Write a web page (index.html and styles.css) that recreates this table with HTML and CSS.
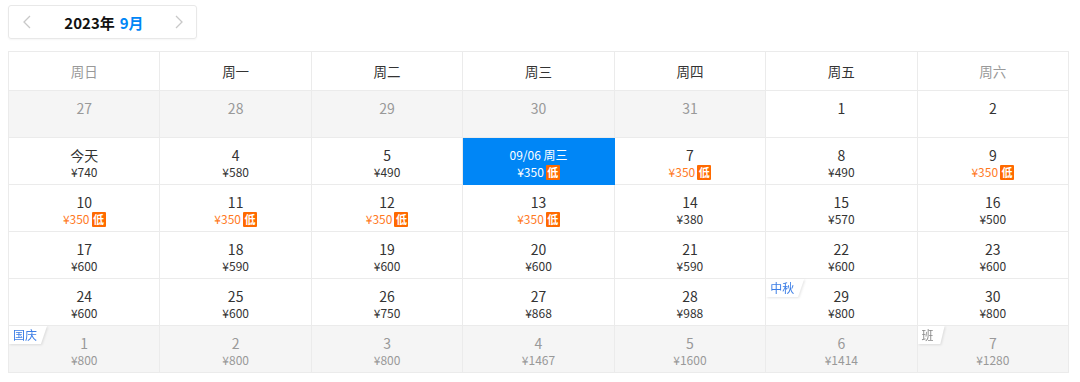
FILE: index.html
```html
<!DOCTYPE html>
<html lang="zh-CN">
<head>
<meta charset="utf-8">
<title>日历</title>
<link rel="stylesheet" href="styles.css">
</head>
<body>
<div class="page">
  <div class="nav">
    <span class="chev">
      <svg width="8" height="14" viewBox="0 0 8 14"><path d="M7 1 L1 7 L7 13" fill="none" stroke="#c8c8c8" stroke-width="1.3"/></svg>
    </span>
    <span class="title"><span class="year">2023年</span><span class="month">9月</span></span>
    <span class="chev">
      <svg width="8" height="14" viewBox="0 0 8 14"><path d="M1 1 L7 7 L1 13" fill="none" stroke="#c8c8c8" stroke-width="1.3"/></svg>
    </span>
  </div>

  <div class="cal">
    <div class="wk weekend">周日</div>
    <div class="wk">周一</div>
    <div class="wk">周二</div>
    <div class="wk">周三</div>
    <div class="wk">周四</div>
    <div class="wk">周五</div>
    <div class="wk weekend">周六</div>

    <div class="day other"><div class="num">27</div></div>
    <div class="day other"><div class="num">28</div></div>
    <div class="day other"><div class="num">29</div></div>
    <div class="day other"><div class="num">30</div></div>
    <div class="day other"><div class="num">31</div></div>
    <div class="day"><div class="num">1</div></div>
    <div class="day"><div class="num">2</div></div>

    <div class="day"><div class="num">今天</div><div class="price">¥740</div></div>
    <div class="day"><div class="num">4</div><div class="price">¥580</div></div>
    <div class="day"><div class="num">5</div><div class="price">¥490</div></div>
    <div class="day selected"><div class="num sel">09/06 周三</div><div class="price">¥350<span class="low">低</span></div></div>
    <div class="day"><div class="num">7</div><div class="price cheap">¥350<span class="low">低</span></div></div>
    <div class="day"><div class="num">8</div><div class="price">¥490</div></div>
    <div class="day"><div class="num">9</div><div class="price cheap">¥350<span class="low">低</span></div></div>

    <div class="day"><div class="num">10</div><div class="price cheap">¥350<span class="low">低</span></div></div>
    <div class="day"><div class="num">11</div><div class="price cheap">¥350<span class="low">低</span></div></div>
    <div class="day"><div class="num">12</div><div class="price cheap">¥350<span class="low">低</span></div></div>
    <div class="day"><div class="num">13</div><div class="price cheap">¥350<span class="low">低</span></div></div>
    <div class="day"><div class="num">14</div><div class="price">¥380</div></div>
    <div class="day"><div class="num">15</div><div class="price">¥570</div></div>
    <div class="day"><div class="num">16</div><div class="price">¥500</div></div>

    <div class="day"><div class="num">17</div><div class="price">¥600</div></div>
    <div class="day"><div class="num">18</div><div class="price">¥590</div></div>
    <div class="day"><div class="num">19</div><div class="price">¥600</div></div>
    <div class="day"><div class="num">20</div><div class="price">¥600</div></div>
    <div class="day"><div class="num">21</div><div class="price">¥590</div></div>
    <div class="day"><div class="num">22</div><div class="price">¥600</div></div>
    <div class="day"><div class="num">23</div><div class="price">¥600</div></div>

    <div class="day"><div class="num">24</div><div class="price">¥600</div></div>
    <div class="day"><div class="num">25</div><div class="price">¥600</div></div>
    <div class="day"><div class="num">26</div><div class="price">¥750</div></div>
    <div class="day"><div class="num">27</div><div class="price">¥868</div></div>
    <div class="day"><div class="num">28</div><div class="price">¥988</div></div>
    <div class="day"><span class="tag"><span class="tag-text">中秋</span></span><div class="num">29</div><div class="price">¥800</div></div>
    <div class="day"><div class="num">30</div><div class="price">¥800</div></div>

    <div class="day other"><span class="tag"><span class="tag-text">国庆</span></span><div class="num">1</div><div class="price">¥800</div></div>
    <div class="day other"><div class="num">2</div><div class="price">¥800</div></div>
    <div class="day other"><div class="num">3</div><div class="price">¥800</div></div>
    <div class="day other"><div class="num">4</div><div class="price">¥1467</div></div>
    <div class="day other"><div class="num">5</div><div class="price">¥1600</div></div>
    <div class="day other"><div class="num">6</div><div class="price">¥1414</div></div>
    <div class="day other"><span class="tag work"><span class="tag-text">班</span></span><div class="num">7</div><div class="price">¥1280</div></div>
  </div>
</div>
</body>
</html>
```

FILE: styles.css
```css
* { box-sizing: border-box; }

body {
  margin: 0;
  background: #fff;
  font-family: "Noto Sans CJK SC", "Noto Sans", sans-serif;
  color: #333;
}

.page {
  padding: 5px 8px 0 8px;
}

.nav {
  width: 189px;
  height: 34px;
  border: 1px solid #e8e8e8;
  border-radius: 3px;
  box-shadow: 0 1px 2px rgba(0, 0, 0, 0.04);
  display: flex;
  align-items: center;
  justify-content: space-between;
  padding: 0 13px 0 14px;
}

.chev {
  display: flex;
  align-items: center;
}

.title {
  font-size: 15px;
  font-weight: 700;
  display: flex;
  gap: 5px;
  margin-left: 2px;
}

.year { color: #111; }
.month { color: #0086f6; }

.cal {
  margin-top: 12px;
  width: 1061px;
  display: grid;
  grid-template-columns: repeat(7, 1fr);
  border-top: 1px solid #ebebeb;
  border-left: 1px solid #ebebeb;
}

.wk {
  height: 39px;
  display: flex;
  align-items: center;
  justify-content: center;
  font-size: 13.5px;
  color: #333;
  border-right: 1px solid #ebebeb;
  border-bottom: 1px solid #ebebeb;
}

.wk.weekend { color: #999; }

.day {
  position: relative;
  height: 47px;
  padding-top: 8px;
  text-align: center;
  border-right: 1px solid #ebebeb;
  border-bottom: 1px solid #ebebeb;
  background: #fff;
}

.day.other {
  background: #f5f5f5;
}

.num {
  font-size: 14px;
  line-height: 18px;
  color: #333;
}

.num.sel {
  font-size: 12px;
}

.price {
  font-size: 12px;
  line-height: 16px;
  color: #333;
  display: flex;
  justify-content: center;
  align-items: center;
}

.day.other .num,
.day.other .price {
  color: #999;
}

.price.cheap {
  color: #ff7a1f;
}

.low {
  display: inline-block;
  width: 14px;
  height: 15px;
  line-height: 15px;
  margin-left: 2px;
  background: #ff6a00;
  color: #fff;
  font-size: 11px;
  font-weight: 700;
  border-radius: 1px;
}

.day.selected {
  background: #0086f6;
  border-color: #0086f6;
}

.day.selected .num,
.day.selected .price {
  color: #fff;
}

.tag {
  position: absolute;
  left: 0;
  top: 0;
  height: 18px;
  filter: drop-shadow(1px 1px 1px rgba(0, 0, 0, 0.1));
}

.tag::before {
  content: "";
  position: absolute;
  inset: 0;
  background: #fff;
  border-bottom-right-radius: 4px;
  clip-path: polygon(0 0, 100% 0, 84% 100%, 0 100%);
}

.tag-text {
  position: relative;
  display: block;
  line-height: 17px;
  padding: 0 10px 0 4px;
  font-size: 12px;
  color: #3c7ee6;
}

.tag.work .tag-text {
  color: #888;
  padding: 0 11px 0 4px;
}
```
